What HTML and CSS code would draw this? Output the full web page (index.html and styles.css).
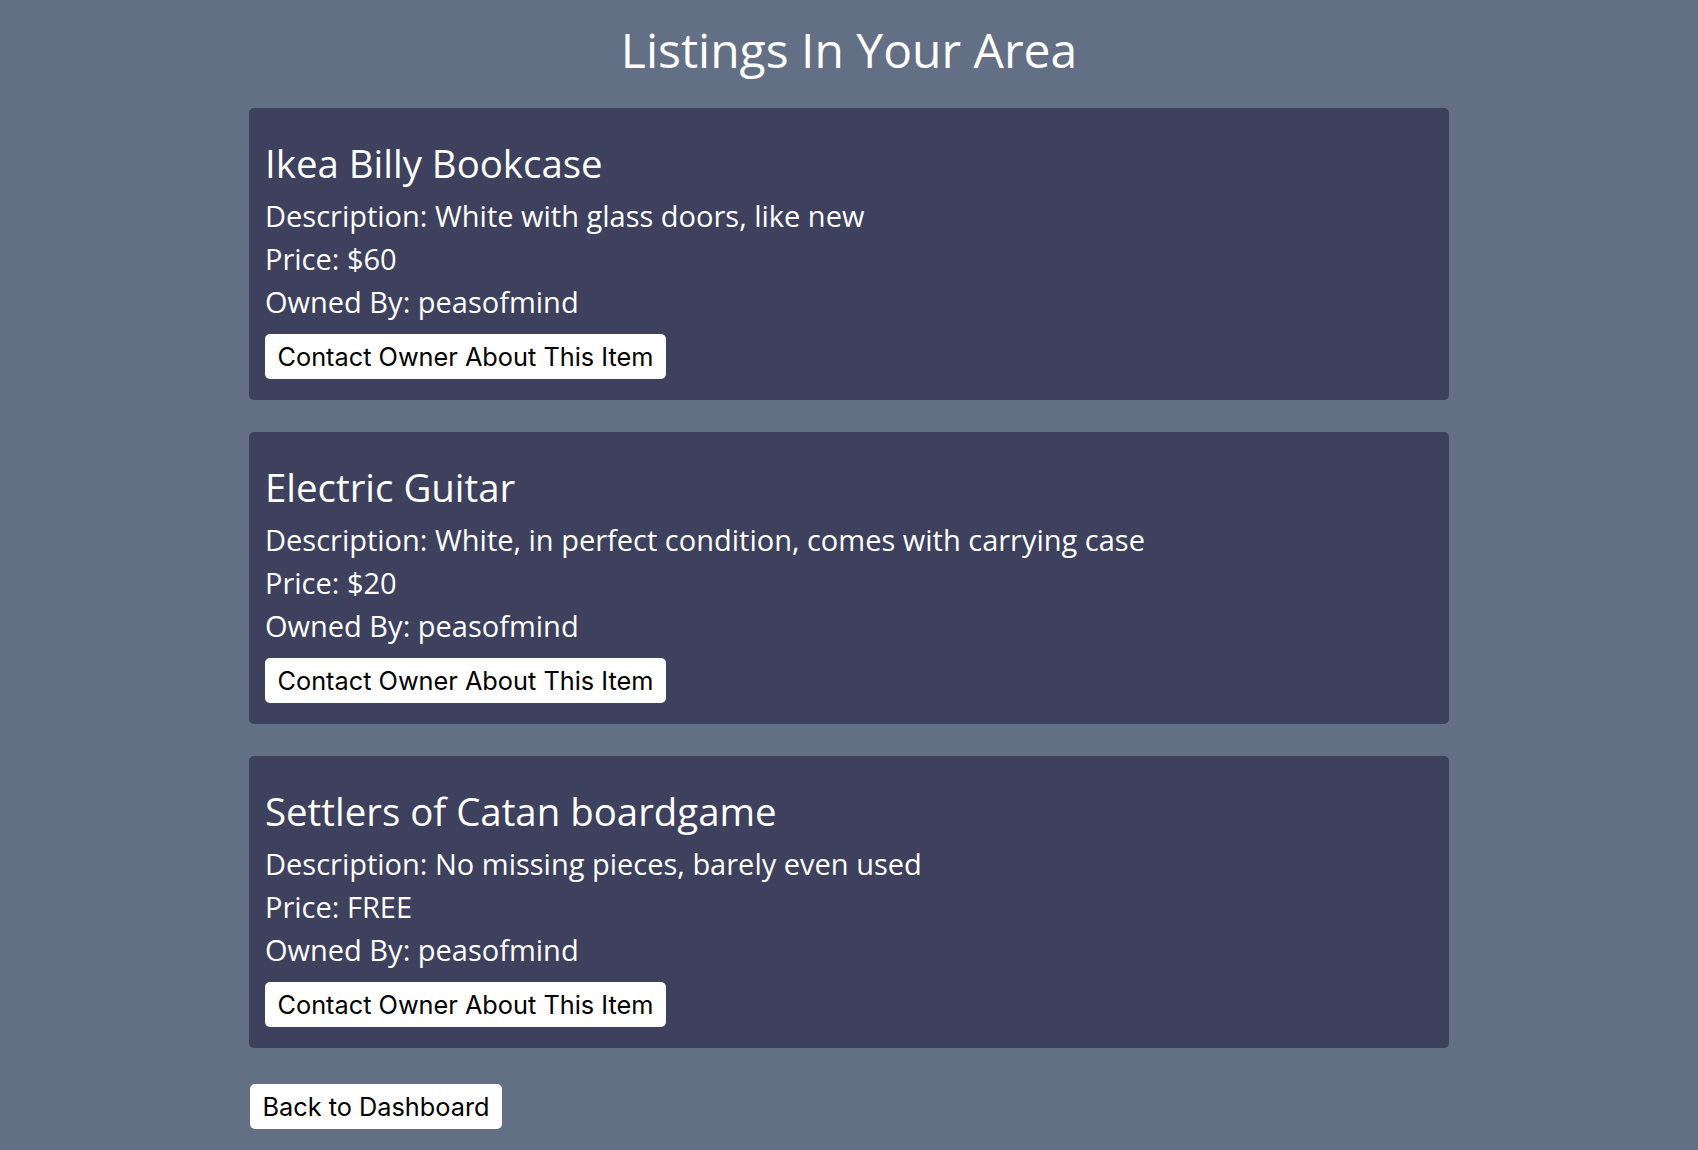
FILE: index.html
```html
<!DOCTYPE html>
<html>
<head>
<meta charset="utf-8">
<title>Listings In Your Area</title>
<link rel="stylesheet" href="styles.css">
</head>
<body>
<main class="page">
  <h1 class="page-title">Listings In Your Area</h1>
  <section class="listing">
    <h2 class="listing-name">Ikea Billy Bookcase</h2>
    <p class="listing-line">Description: White with glass doors, like new</p>
    <p class="listing-line">Price: $60</p>
    <p class="listing-line">Owned By: peasofmind</p>
    <button class="btn">Contact Owner About This Item</button>
  </section>
  <section class="listing">
    <h2 class="listing-name">Electric Guitar</h2>
    <p class="listing-line">Description: White, in perfect condition, comes with carrying case</p>
    <p class="listing-line">Price: $20</p>
    <p class="listing-line">Owned By: peasofmind</p>
    <button class="btn">Contact Owner About This Item</button>
  </section>
  <section class="listing">
    <h2 class="listing-name">Settlers of Catan boardgame</h2>
    <p class="listing-line">Description: No missing pieces, barely even used</p>
    <p class="listing-line">Price: FREE</p>
    <p class="listing-line">Owned By: peasofmind</p>
    <button class="btn">Contact Owner About This Item</button>
  </section>
  <button class="btn btn-back">Back to Dashboard</button>
</main>
</body>
</html>
```
FILE: styles.css
```css
html, body {
  margin: 0;
  background: #636f84;
}
body {
  font-family: "Open Sans", sans-serif;
  color: #ffffff;
}
.page {
  width: 1200px;
  margin: 0 auto;
  padding-bottom: 20px;
}
.page-title {
  margin: 17px 0 26px;
  font-size: 48px;
  font-weight: 400;
  line-height: normal;
  text-align: center;
}
.listing {
  background: #3d415e;
  border-radius: 5px;
  padding: 29px 16px 21px;
  margin-bottom: 32px;
}
.listing-name {
  margin: 0 0 5px;
  font-size: 38.4px;
  font-weight: 400;
  line-height: normal;
}
.listing-line {
  margin: 0;
  font-size: 29px;
  line-height: 43px;
}
.btn {
  display: block;
  margin-top: 11px;
  height: 45px;
  padding: 0 12.5px;
  border: 0;
  border-radius: 5px;
  background: #ffffff;
  color: #000000;
  font-family: Inter, "Liberation Sans", sans-serif;
  font-size: 25.3px;
}
.btn-back {
  margin-top: 36px;
  margin-left: 1px;
}
```
